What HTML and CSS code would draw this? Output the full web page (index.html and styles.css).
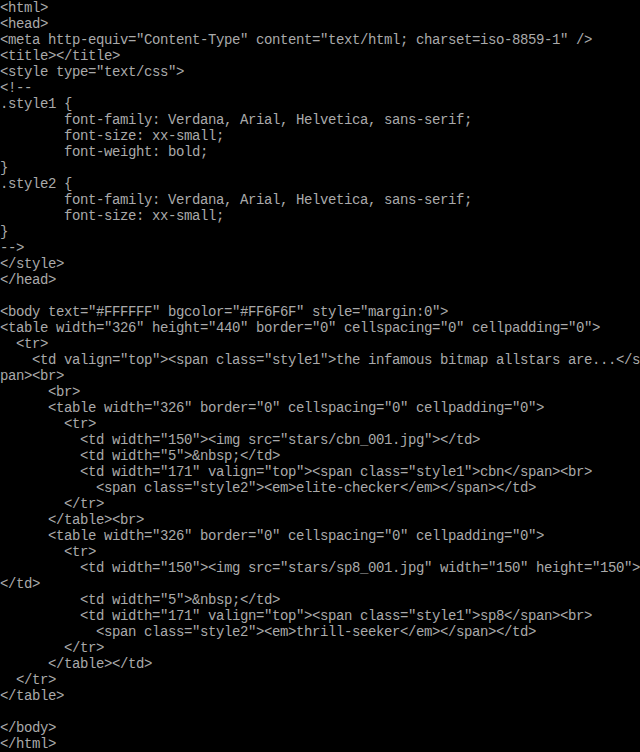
FILE: index.html
```html
<!DOCTYPE html>
<html lang="en">
<head>
    <meta charset="UTF-8">
    <meta name="viewport" content="width=device-width, initial-scale=1.0">
    <title>source</title>
    <link rel="stylesheet" href="styles.css">
</head>
<body>
<pre class="screen">&lt;html&gt;
&lt;head&gt;
&lt;meta http-equiv="Content-Type" content="text/html; charset=iso-8859-1" /&gt;
&lt;title&gt;&lt;/title&gt;
&lt;style type="text/css"&gt;
&lt;!--
.style1 {
        font-family: Verdana, Arial, Helvetica, sans-serif;
        font-size: xx-small;
        font-weight: bold;
}
.style2 {
        font-family: Verdana, Arial, Helvetica, sans-serif;
        font-size: xx-small;
}
--&gt;
&lt;/style&gt;
&lt;/head&gt;

&lt;body text="#FFFFFF" bgcolor="#FF6F6F" style="margin:0"&gt;
&lt;table width="326" height="440" border="0" cellspacing="0" cellpadding="0"&gt;
  &lt;tr&gt;
    &lt;td valign="top"&gt;&lt;span class="style1"&gt;the infamous bitmap allstars are...&lt;/s
pan&gt;&lt;br&gt;
      &lt;br&gt;
      &lt;table width="326" border="0" cellspacing="0" cellpadding="0"&gt;
        &lt;tr&gt;
          &lt;td width="150"&gt;&lt;img src="stars/cbn_001.jpg"&gt;&lt;/td&gt;
          &lt;td width="5"&gt;&amp;nbsp;&lt;/td&gt;
          &lt;td width="171" valign="top"&gt;&lt;span class="style1"&gt;cbn&lt;/span&gt;&lt;br&gt;
            &lt;span class="style2"&gt;&lt;em&gt;elite-checker&lt;/em&gt;&lt;/span&gt;&lt;/td&gt;
        &lt;/tr&gt;
      &lt;/table&gt;&lt;br&gt;
      &lt;table width="326" border="0" cellspacing="0" cellpadding="0"&gt;
        &lt;tr&gt;
          &lt;td width="150"&gt;&lt;img src="stars/sp8_001.jpg" width="150" height="150"&gt;
&lt;/td&gt;
          &lt;td width="5"&gt;&amp;nbsp;&lt;/td&gt;
          &lt;td width="171" valign="top"&gt;&lt;span class="style1"&gt;sp8&lt;/span&gt;&lt;br&gt;
            &lt;span class="style2"&gt;&lt;em&gt;thrill-seeker&lt;/em&gt;&lt;/span&gt;&lt;/td&gt;
        &lt;/tr&gt;
      &lt;/table&gt;&lt;/td&gt;
  &lt;/tr&gt;
&lt;/table&gt;

&lt;/body&gt;
&lt;/html&gt;</pre>
</body>
</html>
```

FILE: styles.css
```css
html, body {
    margin: 0;
    padding: 0;
    background-color: #000;
    height: 100%;
}

.screen {
    margin: 0;
    padding: 0;
    width: 640px;
    height: 752px;
    overflow: hidden;
    font-family: "Liberation Mono", "DejaVu Sans Mono", monospace;
    font-size: 14px;
    letter-spacing: -0.4px;
    line-height: 16px;
    color: #aaaaaa;
    white-space: pre;
}
```
